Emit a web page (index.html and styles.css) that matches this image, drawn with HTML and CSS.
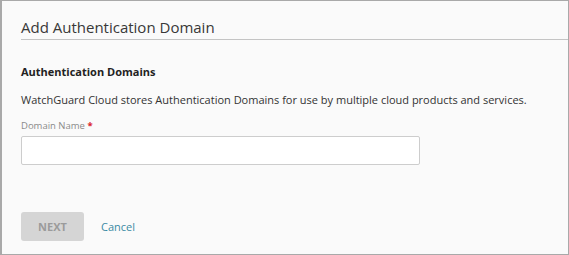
FILE: index.html
```html
<!DOCTYPE html>
<html lang="en">
  <head>
    <title>Add Authentication Domain</title>
    <meta charset="UTF-8">
    <meta name="viewport" content="width=device-width, initial-scale=1.0">
    <link rel="stylesheet" href="styles.css">
  </head>
  <body>
    <div class="frame">
      <h1 class="title">Add Authentication Domain</h1>
      <div class="content">
        <h2 class="section">Authentication Domains</h2>
        <p class="intro">WatchGuard Cloud stores Authentication Domains for use by multiple cloud products and services.</p>
        <label class="label" for="domain">Domain Name <span class="req">*</span></label>
        <input class="field" id="domain" type="text">
        <div class="actions">
          <button class="btn-next" disabled>NEXT</button>
          <a class="cancel" href="#">Cancel</a>
        </div>
      </div>
    </div>
  </body>
</html>
```

FILE: styles.css
```css
* { box-sizing:border-box; }
html, body
{
    margin:0;
    padding:0;
}
body
{
    font-family:"Open Sans", "Noto Sans", sans-serif;
    color:#333;
    background:#fafafa;
}
.frame
{
    width:569px;
    height:255px;
    border:1px solid #a9a9a9;
    border-left-width:2px;
    background:#fafafa;
    padding:15px 0 0 19px;
}
.title
{
    margin:0;
    font-size:15px;
    font-weight:400;
    line-height:22px;
    color:#383838;
    padding-bottom:1px;
    border-bottom:1px solid #c4c4c4;
}
.content
{
    padding-top:24px;
}
.section
{
    margin:0;
    font-size:11px;
    font-weight:700;
    line-height:16px;
    color:#222;
}
.intro
{
    margin:12px 0 0 0;
    font-size:11px;
    line-height:16px;
    white-space:nowrap;
    color:#333;
}
.label
{
    display:block;
    margin-top:11px;
    font-size:9.5px;
    line-height:14px;
    color:#8a8a8a;
}
.req { color:#d9242b; font-weight:700; }
.field
{
    display:block;
    margin-top:3px;
    width:399px;
    height:29px;
    border:1px solid #cdcdcd;
    border-radius:2px;
    background:#fff;
    outline:none;
}
.actions
{
    display:flex;
    align-items:center;
    gap:17px;
    margin-top:47px;
}
.btn-next
{
    width:63px;
    height:29px;
    border:0;
    border-radius:3px;
    background:#d5d5d5;
    color:#9b9b9b;
    font-family:inherit;
    font-size:11px;
    font-weight:700;
    padding:0;
}
.cancel
{
    font-size:11px;
    color:#3a8aa4;
    text-decoration:none;
}
```
